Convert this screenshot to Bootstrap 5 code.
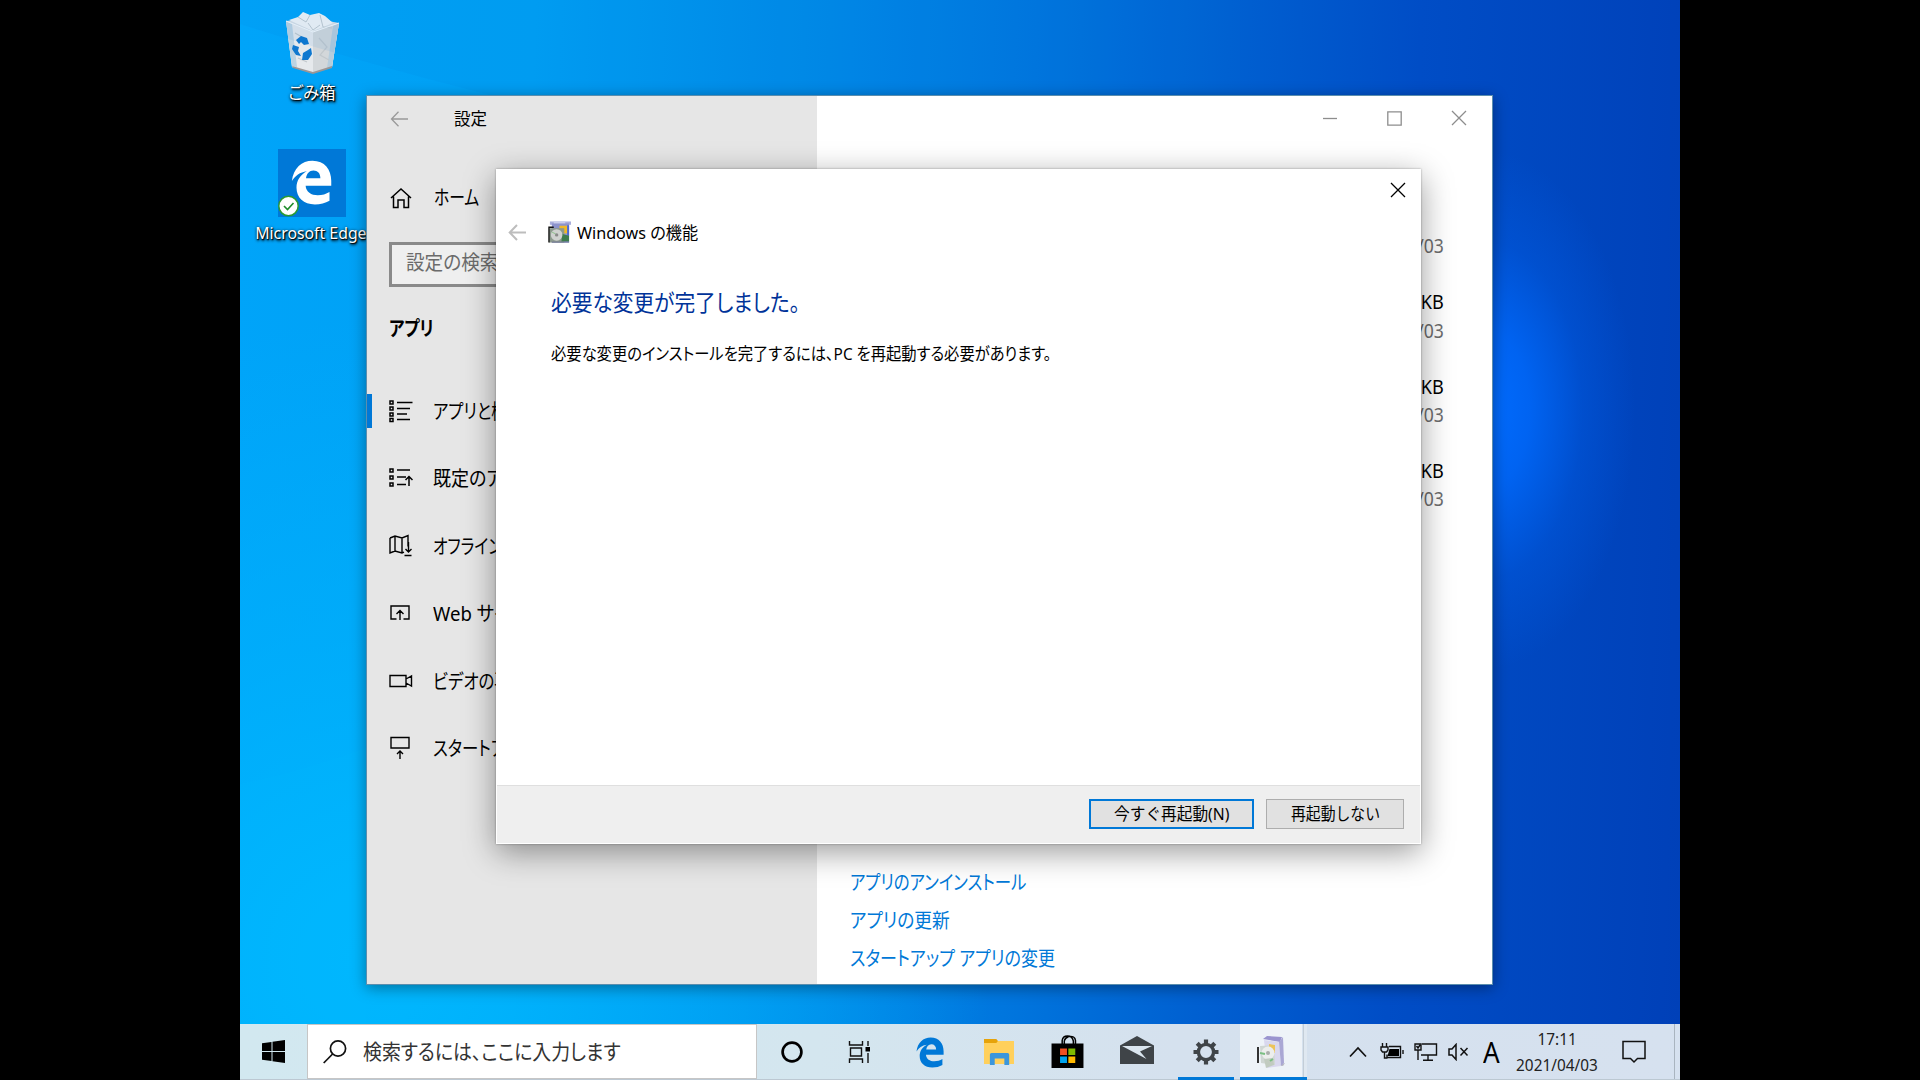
<!DOCTYPE html>
<html lang="ja">
<head>
<meta charset="utf-8">
<title>設定</title>
<link href="https://cdn.jsdelivr.net/npm/bootstrap@5.3.0/dist/css/bootstrap.min.css" rel="stylesheet">
<style>
body{background:#000;width:1920px;height:1080px;font-family:"Noto Sans","Noto Sans CJK JP",sans-serif;color:#000;font-feature-settings:"palt";line-height:1}
svg{display:block;flex:none}
.desktop{width:1440px;height:1080px;
 background:
 radial-gradient(ellipse 150px 260px at 1245px 410px,#006cff 0,rgba(0,104,250,.85) 30%,rgba(0,96,236,.35) 65%,rgba(0,90,230,0) 100%),
 radial-gradient(ellipse 620px 640px at 130px 960px,rgba(0,186,255,.9) 0,rgba(0,178,252,.6) 50%,rgba(0,170,250,0) 100%),
 linear-gradient(92deg,#00a4f9 0,#00a0f3 20%,#0089e7 40%,#0076de 54%,#0060d1 67%,#004dc6 80%,#0040b8 100%)}
.beam{position:absolute;inset:0;pointer-events:none}
.fit{display:inline-block;white-space:nowrap;transform:scaleX(var(--sx,1));transform-origin:0 50%}
.fit-c{transform-origin:50% 50%}
.fit-r{transform-origin:100% 50%}
.n97{--sx:.97}.n95{--sx:.95}.n93{--sx:.93}.n90{--sx:.9}.n85{--sx:.85}.n82{--sx:.82}.n79{--sx:.79}
/* desktop shortcuts */
.shortcuts{width:144px}
.shortcut{height:140px;color:#fff;font-size:16.5px;text-shadow:1px 1px 1px #000,1px 2px 3px #000,0 0 3px rgba(0,0,0,.6)}
.shortcut-name{margin-top:10px}
.edge-name{margin:7px 2px 0 0;font-size:17px}
/* settings window */
.win-settings{position:absolute;left:126px;top:95px;width:1127px;height:890px;border:1px solid #5b8eae;background:#fff;box-shadow:0 3px 14px rgba(0,0,0,.38)}
.side{width:450px;background:#e6e6e6;font-size:20px}
.side .bar{height:45px;padding-left:23px;font-size:17px}
.home-row{height:68px;margin-top:23px;padding-left:23px}
.find{height:45px;margin:10px 22px 0;border:3px solid #8a8a8a;background:#efefef;color:#6b6b6b;padding:0 0 4px 14px}
.sect{height:40px;margin-top:22px;padding-left:22px;font-weight:700}
.side-nav{margin-top:28px}
.side-nav a{height:67.5px;color:#000;padding-left:22px;position:relative;text-decoration:none}
.side-nav a .fit{position:relative;top:1px}
.side-nav a.active::before{content:"";position:absolute;left:0;top:17px;width:5px;height:34px;background:#0078d7}
.ico{width:44px}
.ctl{width:64.5px;height:44px}
.ctls{padding-right:1px}
.apps{padding:64px 48px 0 0;text-align:right;font-size:19.5px}
.apps div{height:28.15px;line-height:28px}
.apps .date{color:#6d6d6d;margin-bottom:28.1px}
.links{padding:0 0 6px 33px;font-size:20px}
.links a{display:block;height:38px;line-height:38px;color:#0078d7;text-decoration:none}
/* wizard */
.win-wizard{position:absolute;left:256px;top:169px;width:925px;height:675px;background:#fff;box-shadow:0 0 2px rgba(0,0,0,.35),0 8px 30px rgba(0,0,0,.4)}
.wiz-close{width:46px;height:42px}
.wiz-head{height:41px;padding:1px 0 0 12px;font-size:17px}
.wiz-body{padding:29px 0 0 55px;font-size:17px}
.wiz-body h1{font-size:22.5px;line-height:44px;margin:0;color:#003399;font-weight:400}
.wiz-body p{line-height:40px;margin:9px 0 0}
.wiz-foot{height:58px;background:#efefef;border-top:1px solid #dfdfdf;margin:0 1px 1px;padding:0 16px 1px 0;gap:12px}
.wbtn{height:30px;border:1px solid #adadad;border-radius:0;background:#e1e1e1;color:#000;font-size:16.5px;line-height:1;padding:1px 0 0}
.wbtn.main-btn{border:2px solid #0078d7;width:165px}
.wbtn.alt-btn{width:138px}
/* taskbar */
.taskbar{height:56px;background:linear-gradient(90deg,#d2e8f0 0,#d4e6ef 40%,#d5e1ee 65%,#d6e1ef 100%);border-bottom:1px solid #bcc8d2}
.taskbar>*{flex:none}
.start{width:67px}
.search{width:450px;height:55px;border:1px solid #c6c6c6;background:#fff;color:#333;font-size:21px;padding-left:15px}
.task{width:69px;height:56px;position:relative}
.task.run::after{content:"";position:absolute;bottom:0;left:6.500px;right:6.500px;height:3px;background:#0078d7}
.task.on{width:62px;background:#eef3f8}
.task.on::after{left:0;right:-5px}
.task.on::before{content:"";position:absolute;top:0;bottom:0;right:-5px;width:4px;background:#dfe8f1;border-left:1px solid #c3cdd7}
.clock{width:110px;font-size:16.5px;line-height:26px;color:#222}
.ime{font-size:29px;margin-left:14px}
.peek{width:6px;border-left:1px solid #a9b4bf;margin-left:28px}
</style>
</head>
<body class="m-0 overflow-hidden d-flex justify-content-center">
<svg width="0" height="0" class="position-absolute"><defs>
 <symbol id="edge" viewBox="0 0 32 36"><path d="M.3 16.800C1.500 6.500 8.200.5 16.800.5 26.500.5 31.800 7.500 31.800 16.500v4H11.300c.3 5 4.500 7.600 9.700 7.600 3.600 0 6.700-1 9.400-2.600v7.100c-3.300 2-7.400 2.900-11.700 2.900-9 0-14.700-5.200-14.700-13.300 0-6.100 3.300-10.500 8.300-13.200-5.600.6-9.400 3.800-12 7.800zM11.600 14.500h11.500c0-4-2.200-6.200-5.500-6.200-3.400 0-5.500 2.600-6 6.200z" fill="currentColor"/></symbol>
 <symbol id="cross" viewBox="0 0 16 16"><path d="M1 1l14 14M15 1L1 15" stroke="currentColor" fill="none" stroke-width="1.300"/></symbol>
</defs></svg>

<main class="desktop position-relative d-flex flex-column">
 <svg class="beam" width="1440" height="1024"><path d="M0 24Q120 62 250 95L420 150H1000V0H0z" fill="#0078dc" opacity=".08"/><path d="M0 784Q60 772 126 748V1024H0z" fill="#00c0ff" opacity=".12"/></svg>

 <section class="shortcuts flex-fill">
  <div class="shortcut d-flex flex-column align-items-center">
   <svg width="56" height="64" viewBox="0 0 56 64" style="margin-top:11px">
    <path d="M2 10l26-3 27 5-7 44-19 6-21-6z" fill="#d9dfe4"/>
    <path d="M2 10l27 11 26-9-7 44-19 6-21-6z" fill="#e6e9ec"/>
    <path d="M29 21l26-9-7 44-19 6z" fill="#d3d7da"/>
    <path d="M2 10l6 3 5 43-5-1zM55 12l-6 3-6 42 5-1z" fill="#a9c9de" opacity=".7"/>
    <path d="M5 9l9-3 5-5 7 3 9-2 6 3 8 7-20 8z" fill="#f4f5f6"/>
    <path d="M14 6l8 5 4-7M36 4l3 12 9 1M24 12l5 7 7-5" fill="none" stroke="#c3cace"/>
    <path d="M35 27l8 9-7 8 9 5M11 22l7 4M14 47l9 4" fill="none" stroke="#c2c8cc" stroke-width="1.200"/>
    <path d="M8 55l21 6 19-6v2l-19 6-20-6z" fill="#9b9696"/>
    <path d="M2 10l27 11 26-9" stroke="#f8fafb" fill="none"/>
    <path d="M12 29l5-4 6 2 2 6-5 1-3-3-2 2zM9 34l6 2-1 4 3 5-5-1-4-6zM19 42l5-3 3-2 1 6-4 6h-6z" fill="#1078cf"/>
   </svg>
   <span class="fit fit-c shortcut-name">ごみ箱</span>
  </div>
  <div class="shortcut d-flex flex-column align-items-center">
   <div class="position-relative" style="margin-top:9px"><svg width="68" height="68" viewBox="0 0 68 68"><path fill="#0078d7" d="M0 0h68v68H0z"/><use href="#edge" x="13" y="11" width="41" height="45" color="#fff"/><circle cx="10.500" cy="57" r="9.700" fill="#fff" stroke="#2a9a32" stroke-width="1.500"/><path d="M6 57l3.500 3.500L15.500 54" fill="none" stroke="#1d8c2a" stroke-width="1.600"/></svg></div>
   <span class="fit fit-c edge-name n93">Microsoft Edge</span>
  </div>
 </section>

 <section class="win-settings d-flex">
  <aside class="side">
   <div class="bar d-flex align-items-center">
    <svg width="19" height="16" viewBox="0 0 19 16" stroke="#999" fill="none" stroke-width="1.300"><path d="M18 8H1.500M8.500.8L1.500 8l7 7.200"/></svg>
    <span class="fit n97" style="margin-left:45px">設定</span>
   </div>
   <div class="home-row d-flex align-items-center"><span class="ico"><svg width="22" height="22" viewBox="0 0 22 22" fill="none" stroke="#000" stroke-width="1.500"><path d="M1 11L11 2l10 9M3.500 9.500v11H8V13h6v7.500h4.500v-11"/></svg></span><span class="fit n79">ホーム</span></div>
   <div class="find d-flex align-items-center"><span class="fit n93">設定の検索</span></div>
   <div class="sect d-flex align-items-center"><span class="fit n82">アプリ</span></div>
   <nav class="side-nav nav flex-column flex-nowrap">
    <a href="#" class="active d-flex align-items-center"><span class="ico"><svg width="24" height="24" viewBox="0 0 24 24" fill="none" stroke="#000" stroke-width="1.500"><path d="M1 2h3v3H1zM1 8h3v3H1zM1 14h3v3H1zM1 19.500h3v3H1zM8 3.500h15.500M8 9.500h13M8 15h10M8 20.500h13"/></svg></span><span class="fit n82">アプリと機能</span></a>
    <a href="#" class="d-flex align-items-center"><span class="ico"><svg width="24" height="24" viewBox="0 0 24 24" fill="none" stroke="#000" stroke-width="1.500"><path d="M1 3h3v3H1zM1 10h3v3H1zM1 17h3v3H1zM8 4h13M8 11h9M8 18.500h9M20 20v-10M16.500 14l3.500-3.500 3.500 3.500"/></svg></span><span class="fit n90">既定のアプリ</span></a>
    <a href="#" class="d-flex align-items-center"><span class="ico"><svg width="24" height="24" viewBox="0 0 24 24" fill="none" stroke="#000" stroke-width="1.400"><path d="M1 4l5-2 7 2 6-2.500v11M1 4v15l5-2 7 2 2-.8M6 2v15M13 4v15M19.500 8v10M16.500 15l3 3 3-3M15.500 21.500h7"/></svg></span><span class="fit n79">オフライン マップ</span></a>
    <a href="#" class="d-flex align-items-center"><span class="ico"><svg width="24" height="24" viewBox="0 0 24 24" fill="none" stroke="#000" stroke-width="1.400"><path d="M7.500 18H2V5h18v13h-5.500M11 19v-9M7.500 13L11 9.500l3.500 3.500"/></svg></span><span class="fit n93">Web サイト用のアプリ</span></a>
    <a href="#" class="d-flex align-items-center"><span class="ico"><svg width="24" height="24" viewBox="0 0 24 24" fill="none" stroke="#000" stroke-width="1.400"><path d="M1 6.500h16v11H1zM17 10l5.500-3v10L17 14"/></svg></span><span class="fit n82">ビデオの再生</span></a>
    <a href="#" class="d-flex align-items-center"><span class="ico"><svg width="24" height="24" viewBox="0 0 24 24" fill="none" stroke="#000" stroke-width="1.400"><path d="M2 1.500h18V12H2zM11 23v-8M8 18l3-3 3 3"/></svg></span><span class="fit n82">スタートアップ</span></a>
   </nav>
  </aside>
  <div class="flex-fill d-flex flex-column">
   <div class="ctls d-flex justify-content-end">
    <span class="ctl d-flex align-items-center justify-content-center"><svg width="14" height="14"><path d="M0 7.500h14" stroke="#8d8d8d" stroke-width="1.300"/></svg></span>
    <span class="ctl d-flex align-items-center justify-content-center"><svg width="15" height="15"><path d="M.8.8h13.400v13.400H.8z" stroke="#8d8d8d" stroke-width="1.300" fill="none"/></svg></span>
    <span class="ctl d-flex align-items-center justify-content-center" style="color:#8d8d8d"><svg width="16" height="16"><use href="#cross"/></svg></span>
   </div>
   <div class="apps">
    <div></div><div class="date"><span class="fit fit-r n90">2021/04/03</span></div>
    <div><span class="fit fit-r n93">KB</span></div><div class="date"><span class="fit fit-r n90">2021/04/03</span></div>
    <div><span class="fit fit-r n93">KB</span></div><div class="date"><span class="fit fit-r n90">2021/04/03</span></div>
    <div><span class="fit fit-r n93">KB</span></div><div class="date"><span class="fit fit-r n90">2021/04/03</span></div>
   </div>
   <div class="links mt-auto">
    <a href="#"><span class="fit n82">アプリのアンインストール</span></a>
    <a href="#"><span class="fit" style="--sx:.885">アプリの更新</span></a>
    <a href="#"><span class="fit n85">スタートアップ アプリの変更</span></a>
   </div>
  </div>
 </section>

 <section class="win-wizard d-flex flex-column">
  <div class="d-flex justify-content-end"><span class="wiz-close d-flex align-items-center justify-content-center"><svg width="16" height="16"><use href="#cross"/></svg></span></div>
  <div class="wiz-head d-flex align-items-center">
   <svg width="19" height="17" viewBox="0 0 19 17" stroke="#bdbdbd" fill="none" stroke-width="2"><path d="M18 8.500H2M9 1L1.700 8.500 9 16"/></svg>
   <svg width="23" height="24" viewBox="0 0 24 24" style="margin-left:21px"><path d="M2 1h22v3.500H2z" fill="#a9aedb"/><path d="M4 3h18v20H4z" fill="#8c93cc"/><path d="M6 1h12v2H6z" fill="#c9cdec"/><path d="M12 5.500h8v8h-8z" fill="#f0b827"/><path d="M20 5h2v11h-2z" fill="#4a68d0"/><path d="M1 8h16v15H1z" fill="#8c998d"/><path d="M15 14l7 2v6h-8z" fill="#3d7c4d"/><circle cx="9" cy="15" r="6" fill="#d0d2d0"/><circle cx="9" cy="15" r="1.800" fill="#8a8a8a"/><path d="M4 12l4 2" stroke="#8cc08b"/><path d="M1 23V7h5" stroke="#111" fill="none" stroke-width="1.400"/><path d="M4 22.500h18" stroke="#6f7596"/></svg>
   <span class="fit n95" style="margin-left:6px">Windows の機能</span>
  </div>
  <div class="wiz-body flex-fill">
   <h1><span class="fit" style="--sx:.92">必要な変更が完了しました。</span></h1>
   <p><span class="fit n90">必要な変更のインストールを完了するには、PC を再起動する必要があります。</span></p>
  </div>
  <div class="wiz-foot d-flex align-items-center justify-content-end">
   <button class="btn wbtn main-btn"><span class="fit fit-c n95">今すぐ再起動(N)</span></button>
   <button class="btn wbtn alt-btn"><span class="fit fit-c n90">再起動しない</span></button>
  </div>
 </section>

 <footer class="taskbar d-flex">
  <span class="start d-flex align-items-center justify-content-center"><svg width="23" height="23" viewBox="0 0 23 23"><path d="M0 3.200l9.500-1.300v9H0zM10.500 1.700L23 0v10.900H10.500zM0 12h9.500v9L0 19.700zM10.500 12H23v11l-12.500-1.700z"/></svg></span>
  <div class="search d-flex align-items-center"><svg width="24" height="24" viewBox="0 0 24 24" fill="none" stroke="#111" stroke-width="1.700"><circle cx="15" cy="8.500" r="7.600"/><path d="M9.600 14L.7 23"/></svg><span class="fit n90" style="margin-left:16px">検索するには、ここに入力します</span></div>
  <span class="task d-flex align-items-center justify-content-center"><svg width="22" height="22"><circle cx="11" cy="11" r="9.400" fill="none" stroke="#000" stroke-width="2.700"/></svg></span>
  <span class="task d-flex align-items-center justify-content-center" style="padding-right:2px"><svg width="24" height="22" viewBox="0 0 24 22" fill="none" stroke="#111" stroke-width="1.400"><path d="M1.500 0v4h13V0M2.500 7h11v8h-11zM1.500 22v-4h13v4M20 0v5M20 12v10"/><path d="M17.500 6h4.500v4.500h-4.500z" fill="#000" stroke="none"/></svg></span>
  <span class="task d-flex align-items-center justify-content-center" style="color:#0078d7"><svg width="28" height="31"><use href="#edge"/></svg></span>
  <span class="task d-flex align-items-center justify-content-center"><svg width="30" height="26" viewBox="0 0 28 26" preserveAspectRatio="none"><path d="M0 2h28v23H0z" fill="#ffd05c"/><path d="M0 0h11.500l1.500 2-1.500 2H0z" fill="#e6a30a"/><path d="M5.500 26V15.500a1.500 1.500 0 0 1 1.500-1.500h15a1.500 1.500 0 0 1 1.500 1.500V26H19v-6.500h-9V26z" fill="#3b96dc"/></svg></span>
  <span class="task d-flex align-items-center justify-content-center" style="padding-bottom:2px"><svg width="33" height="33" viewBox="0 0 31 33" preserveAspectRatio="none"><path d="M.5 8.500h30V33H.5z"/><path d="M10.500 9V5.500Q11 1 15.500 1T21 6v3M12.500 9V6q.5-3 4-4.500 6-1 6.500 4V9" fill="none" stroke="#000" stroke-width="1.400"/><path d="M8.500 13.500H15V20H8.500z" fill="#f25022"/><path d="M16.300 13.500h6.500V20h-6.500z" fill="#7fba00"/><path d="M8.500 21.500H15V28H8.500z" fill="#00a4ef"/><path d="M16.300 21.500h6.500V28h-6.500z" fill="#ffb900"/></svg></span>
  <span class="task d-flex align-items-center justify-content-center" style="padding-bottom:5px"><svg width="34" height="28" viewBox="0 0 34 28"><path d="M0 9.500L17 0l17 9.500V28H0z" fill="#3f4448"/><path d="M2 10h30L20 15.500l6.500 7.500z" fill="#dbe6ef"/></svg></span>
  <span class="task run d-flex align-items-center justify-content-center"><svg width="26" height="26" viewBox="0 0 26 26"><g fill="none" stroke="#3f4448"><circle cx="13" cy="13" r="7.600" stroke-width="3.400"/><path d="M10 1.500v5M16 1.500v5M10 19.500v5M16 19.500v5M1.500 10h5M1.500 16h5M19.500 10h5M19.500 16h5" stroke-width="0"/><path d="M13 .5v5M13 20.500v5M.5 13h5M20.500 13h5M4.200 4.200l3.500 3.500M18.300 18.300l3.500 3.500M4.200 21.800l3.500-3.500M18.300 7.700l3.500-3.500" stroke-width="4.200"/></g></svg></span>
  <span class="task run on d-flex align-items-center justify-content-center"><svg width="30" height="34" viewBox="0 0 30 34"><path d="M22 30l7-2-2 3z" fill="#b8b8c0"/><path d="M7 4l4-3 15 1-2 5z" fill="#9a94cf"/><path d="M8 5l15 2 2 24-14 2z" fill="#d9d8ee"/><path d="M23 7l4-5 1 26-3 3z" fill="#aaa7d4"/><path d="M4 11l14-1 1 20-14-2z" fill="#cfd6d3"/><path d="M13 9l6 1v8h-6z" fill="#ecc45a"/><circle cx="12" cy="18" r="6.500" fill="#eceeec"/><circle cx="12" cy="18" r="2" fill="#a9adab"/><path d="M8 24l9-1 1 7-8 3z" fill="#c1cbc0"/><path d="M4 18l5 1M14 26l3-2" stroke="#7bbf83" stroke-width="2"/><path d="M2 12v16" stroke="#333" stroke-width="2"/></svg></span>
  <div class="d-flex align-items-center ms-auto">
   <svg width="18" height="12" fill="none" stroke="#111" stroke-width="1.700"><path d="M1 10.500L9 2l8 8.500"/></svg>
   <svg width="24" height="18" viewBox="0 0 24 18" style="margin-left:13px" fill="none" stroke="#111" stroke-width="1.400"><path d="M2.500 0v4M6.500 0v4M1 4h7v3L6.500 9h-4L1 7zM4.500 9v6h3M9 3.500h11.500v11H7v-3M23 7v4"/><path d="M9.500 6h9.500v7H7.500z" fill="#000" stroke="none"/></svg>
   <svg width="24" height="20" viewBox="0 0 24 20" style="margin-left:10px" fill="none" stroke="#111" stroke-width="1.400"><path d="M8 2h14.500v11H7M1 2h6v6H1zM2.500 4l1.500 2 2-3M4 8v10M14 13v5M9 18.300h10"/></svg>
   <svg width="21" height="18" viewBox="0 0 21 18" style="margin-left:10px" fill="none" stroke="#111" stroke-width="1.500"><path d="M1 6v6h3l4 4.500V1.500L4 6zM12.500 5l7 7.500M19.500 5l-7 7.500"/></svg>
   <span class="fit ime n90">A</span>
   <div class="clock text-center" style="margin-right:10px"><div><span class="fit fit-c n93">17:11</span></div><div><span class="fit fit-c n93">2021/04/03</span></div></div>
   <svg width="24" height="24" viewBox="0 0 24 24" fill="none" stroke="#111" stroke-width="1.500"><path d="M1 1.500h22v17h-7.500L12 22l-3.500-3.500H1z"/></svg>
  </div>
  <span class="peek"></span>
 </footer>
</main>
<script src="https://cdn.jsdelivr.net/npm/bootstrap@5.3.0/dist/js/bootstrap.bundle.min.js"></script>
</body>
</html>
